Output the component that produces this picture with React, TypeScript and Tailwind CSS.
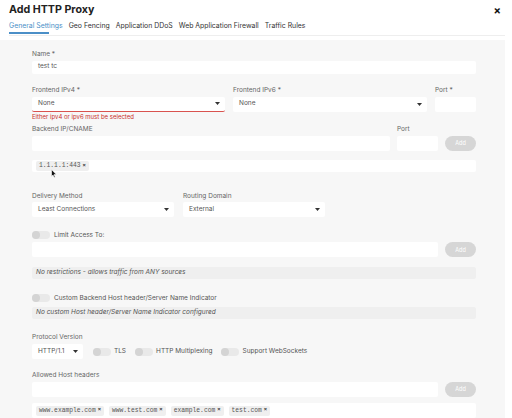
import React from "react";

const font = { fontFamily: "Inter, 'Open Sans', sans-serif" };

function Label({ children, className = "" }: { children: React.ReactNode; className?: string }) {
  return <div className={`text-[6.5px] leading-[8px] text-[#666] ${className}`}>{children}</div>;
}

function Caret() {
  return (
    <svg width="5" height="3" viewBox="0 0 5 3" className="shrink-0">
      <path d="M0 0 L5 0 L2.5 3 Z" fill="#333" />
    </svg>
  );
}

function Select({ value, className = "", error = false }: { value: string; className?: string; error?: boolean }) {
  return (
    <div
      className={`h-[15px] bg-white rounded-[2px] flex items-center justify-between pl-[6px] pr-[5px] text-[6.5px] text-[#555] ${
        error ? "border-b border-[#d9534f]" : ""
      } ${className}`}
    >
      <span>{value}</span>
      <Caret />
    </div>
  );
}

function Input({ value = "", className = "" }: { value?: string; className?: string }) {
  return (
    <div className={`h-[15px] bg-white rounded-[2px] flex items-center pl-[6px] text-[6.5px] text-[#555] ${className}`}>
      {value}
    </div>
  );
}

function AddBtn() {
  return (
    <div className="w-[31px] h-[15px] rounded-full bg-[#d6d6d6] flex items-center justify-center text-[5.5px] text-white shrink-0">
      Add
    </div>
  );
}

function Toggle() {
  return (
    <div className="w-[18px] h-[8px] rounded-full bg-[#e9e9e9] flex items-center shrink-0">
      <div className="w-[8px] h-[8px] rounded-full bg-[#d4d4d4]" />
    </div>
  );
}

function Chip({ text }: { text: string }) {
  return (
    <div
      className="h-[10px] px-[3px] bg-[#efefef] rounded-[2px] flex items-center gap-[2px] text-[6.3px] text-[#555]"
      style={{ fontFamily: "'Liberation Mono', 'DejaVu Sans Mono', monospace" }}
    >
      <span>{text}</span>
      <span className="text-[#333] font-bold text-[5.5px]">×</span>
    </div>
  );
}

export default function App() {
  return (
    <div className="w-[512px] h-[418px] bg-white overflow-hidden relative" style={font}>
      {/* Header */}
      <div className="h-[40px] w-[512px]">
        <div className="flex items-center justify-between pt-[4px] h-[16px] pl-[9px] pr-[11px]">
          <div className="text-[10.7px] font-bold text-[#222] leading-[12px]">Add HTTP Proxy</div>
          <div className="text-[11px] font-bold text-[#111] leading-[10px]">×</div>
        </div>
        <div className="w-[505px] pl-[9px]">
          <div className="flex gap-[6px] mt-[5px] text-[6.9px] leading-[9px] text-[#333] border-b border-[#eeeeee] pb-[5px]">
            <div className="relative text-[#4b8fc7]">
              General Settings
              <div className="absolute left-0 top-[11px] w-[40px] h-[1.5px] bg-[#4b8fc7]" />
            </div>
            <div>Geo Fencing</div>
            <div>Application DDoS</div>
            <div>Web Application Firewall</div>
            <div>Traffic Rules</div>
          </div>
        </div>
      </div>

      {/* Body */}
      <div className="w-[505px] h-[378px] bg-[#f7f7f7] pl-[32px] pr-[29px] pt-[10px] flex flex-col">
        <Label className="mb-[3px]">Name *</Label>
        <Input value="test tc" />

        <div className="flex gap-[8px] mt-[12px]">
          <div className="w-[193px] shrink-0">
            <Label className="mb-[3px]">Frontend IPv4 *</Label>
            <Select value="None" error />
            <div className="text-[6px] leading-[7px] text-[#c9302c] mt-[1px]">Either ipv4 or ipv6 must be selected</div>
          </div>
          <div className="w-[194px] shrink-0">
            <Label className="mb-[3px]">Frontend IPv6 *</Label>
            <Select value="None" />
          </div>
          <div className="flex-1">
            <Label className="mb-[3px]">Port *</Label>
            <Input />
          </div>
        </div>

        <div className="flex gap-[7px] mt-[5px] items-end">
          <div className="w-[358px] shrink-0">
            <Label className="mb-[3px]">Backend IP/CNAME</Label>
            <Input />
          </div>
          <div className="w-[41px] shrink-0">
            <Label className="mb-[3px]">Port</Label>
            <Input />
          </div>
          <AddBtn />
        </div>

        <div className="h-[15px] mt-[9px] bg-white rounded-[2px] flex items-center pl-[4px] gap-[5px]">
          <Chip text="1.1.1.1:443" />
        </div>

        <div className="flex gap-[9px] mt-[20px]">
          <div className="w-[142px]">
            <Label className="mb-[2px]">Delivery Method</Label>
            <Select value="Least Connections" />
          </div>
          <div className="w-[142px]">
            <Label className="mb-[2px]">Routing Domain</Label>
            <Select value="External" />
          </div>
        </div>

        <div className="flex items-center gap-[4px] mt-[14px] h-[8px]">
          <Toggle />
          <span className="text-[6.5px] text-[#555] leading-[8px]">Limit Access To:</span>
        </div>
        <div className="flex gap-[7px] mt-[3px]">
          <Input className="flex-1" />
          <AddBtn />
        </div>
        <div className="h-[14px] mt-[10px] bg-[#efefef] rounded-[2px] flex items-center pl-[4px] text-[6.5px] italic text-[#555]">
          No restrictions - allows traffic from ANY sources
        </div>

        <div className="flex items-center gap-[4px] mt-[15px] h-[8px]">
          <Toggle />
          <span className="text-[6.5px] text-[#555] leading-[8px]">Custom Backend Host header/Server Name Indicator</span>
        </div>
        <div className="h-[14px] mt-[5px] bg-[#efefef] rounded-[2px] flex items-center pl-[4px] text-[6.5px] italic text-[#555]">
          No custom Host header/Server Name Indicator configured
        </div>

        <Label className="mt-[14px] mb-[3px]">Protocol Version</Label>
        <div className="flex items-center h-[15px]">
          <Select value="HTTP/1.1" className="w-[51px]" />
          <div className="flex items-center gap-[3px] ml-[10px]">
            <Toggle />
            <span className="text-[6.5px] text-[#555]">TLS</span>
          </div>
          <div className="flex items-center gap-[3px] ml-[9px]">
            <Toggle />
            <span className="text-[6.5px] text-[#555]">HTTP Multiplexing</span>
          </div>
          <div className="flex items-center gap-[3px] ml-[9px]">
            <Toggle />
            <span className="text-[6.5px] text-[#555]">Support WebSockets</span>
          </div>
        </div>

        <Label className="mt-[12px] mb-[3px]">Allowed Host headers</Label>
        <div className="flex gap-[7px]">
          <Input className="flex-1" />
          <AddBtn />
        </div>
        <div className="h-[15px] mt-[6px] bg-white rounded-[2px] flex items-center pl-[4px] gap-[5px] shrink-0">
          <Chip text="www.example.com" />
          <Chip text="www.test.com" />
          <Chip text="example.com" />
          <Chip text="test.com" />
        </div>
      </div>

      {/* mouse cursor */}
      <svg className="absolute left-[51px] top-[169px]" width="6" height="9" viewBox="0 0 6 9">
        <path d="M0.5 0.5 L0.5 7.5 L2 6 L3.2 8.5 L4.2 8 L3 5.6 L5.3 5.6 Z" fill="#111" stroke="#fff" strokeWidth="0.6" />
      </svg>
    </div>
  );
}
